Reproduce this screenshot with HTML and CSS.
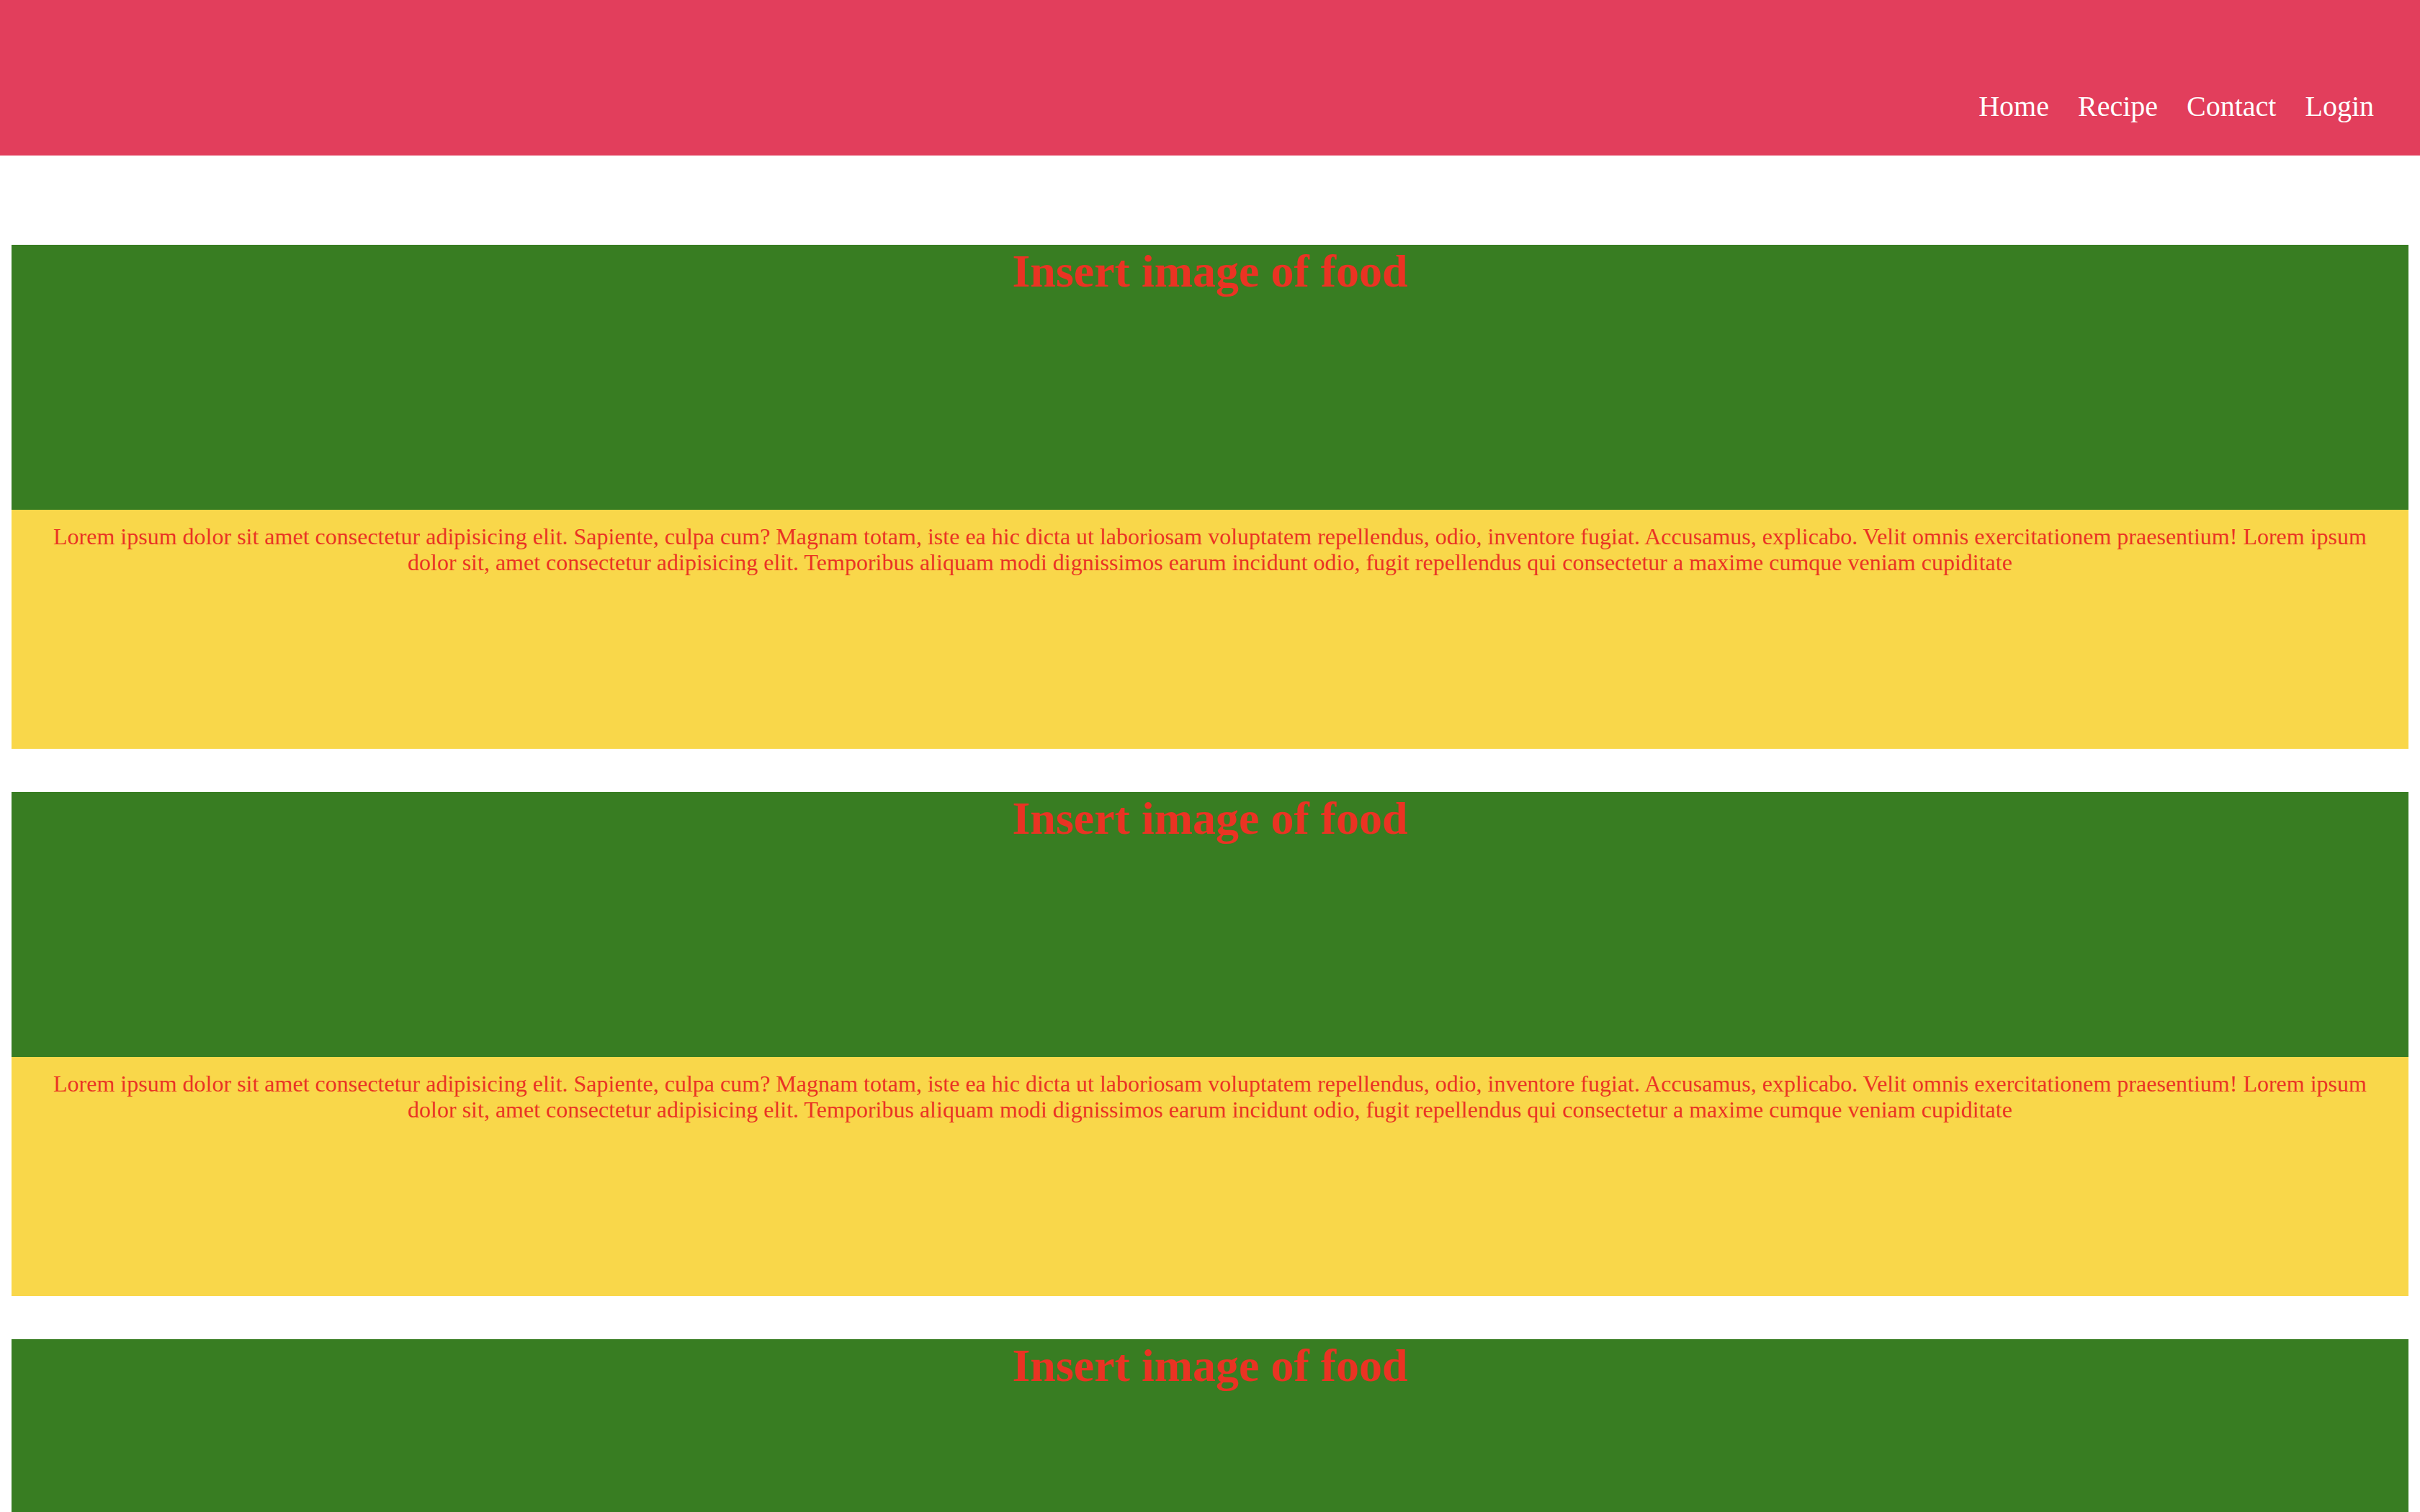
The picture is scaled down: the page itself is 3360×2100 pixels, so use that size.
FILE: index.html
```html
<!DOCTYPE html>
<html lang="en">
<head>
<meta charset="utf-8">
<title>Recipes</title>
<link rel="stylesheet" href="styles.css">
</head>
<body>
<header class="site-header">
  <nav class="nav">
    <a class="nav-link" href="#">Home</a>
    <a class="nav-link" href="#">Recipe</a>
    <a class="nav-link" href="#">Contact</a>
    <a class="nav-link" href="#">Login</a>
  </nav>
</header>
<main class="cards">
  <section class="card">
    <div class="card-image"><h1 class="card-title">Insert image of food</h1></div>
    <div class="card-body"><p class="card-text">Lorem ipsum dolor sit amet consectetur adipisicing elit. Sapiente, culpa cum? Magnam totam, iste ea hic dicta ut laboriosam voluptatem repellendus, odio, inventore fugiat. Accusamus, explicabo. Velit omnis exercitationem praesentium! Lorem ipsum dolor sit, amet consectetur adipisicing elit. Temporibus aliquam modi dignissimos earum incidunt odio, fugit repellendus qui consectetur a maxime cumque veniam cupiditate</p></div>
  </section>
  <section class="card">
    <div class="card-image"><h1 class="card-title">Insert image of food</h1></div>
    <div class="card-body"><p class="card-text">Lorem ipsum dolor sit amet consectetur adipisicing elit. Sapiente, culpa cum? Magnam totam, iste ea hic dicta ut laboriosam voluptatem repellendus, odio, inventore fugiat. Accusamus, explicabo. Velit omnis exercitationem praesentium! Lorem ipsum dolor sit, amet consectetur adipisicing elit. Temporibus aliquam modi dignissimos earum incidunt odio, fugit repellendus qui consectetur a maxime cumque veniam cupiditate</p></div>
  </section>
  <section class="card">
    <div class="card-image"><h1 class="card-title">Insert image of food</h1></div>
    <div class="card-body"><p class="card-text">Lorem ipsum dolor sit amet consectetur adipisicing elit. Sapiente, culpa cum? Magnam totam, iste ea hic dicta ut laboriosam voluptatem repellendus, odio, inventore fugiat. Accusamus, explicabo. Velit omnis exercitationem praesentium! Lorem ipsum dolor sit, amet consectetur adipisicing elit. Temporibus aliquam modi dignissimos earum incidunt odio, fugit repellendus qui consectetur a maxime cumque veniam cupiditate</p></div>
  </section>
</main>
</body>
</html>
```
FILE: styles.css
```css
html, body {
  margin: 0;
  padding: 0;
  background: #ffffff;
  font-family: "Liberation Serif", "Times New Roman", serif;
}

.site-header {
  height: 216px;
  box-sizing: border-box;
  background: #e23e5c;
  padding: 124px 64px 0 0;
}

.nav {
  display: flex;
  justify-content: flex-end;
  gap: 40px;
}

.nav-link {
  color: #ffffff;
  text-decoration: none;
  font-size: 40px;
}

.cards {
  display: flex;
  flex-direction: column;
  gap: 60px;
  padding: 124px 16px 0 16px;
}

.card-image {
  height: 368px;
  background: #387d22;
}

.card-title {
  margin: 0;
  text-align: center;
  color: #ea3323;
  font-size: 64px;
  font-weight: bold;
}

.card-body {
  height: 332px;
  box-sizing: border-box;
  background: #f9d74a;
  padding: 20px 40px 0 40px;
}

.card-text {
  margin: 0;
  text-align: center;
  color: #ea3323;
  font-size: 32px;
  line-height: 35.7px;
}
```
